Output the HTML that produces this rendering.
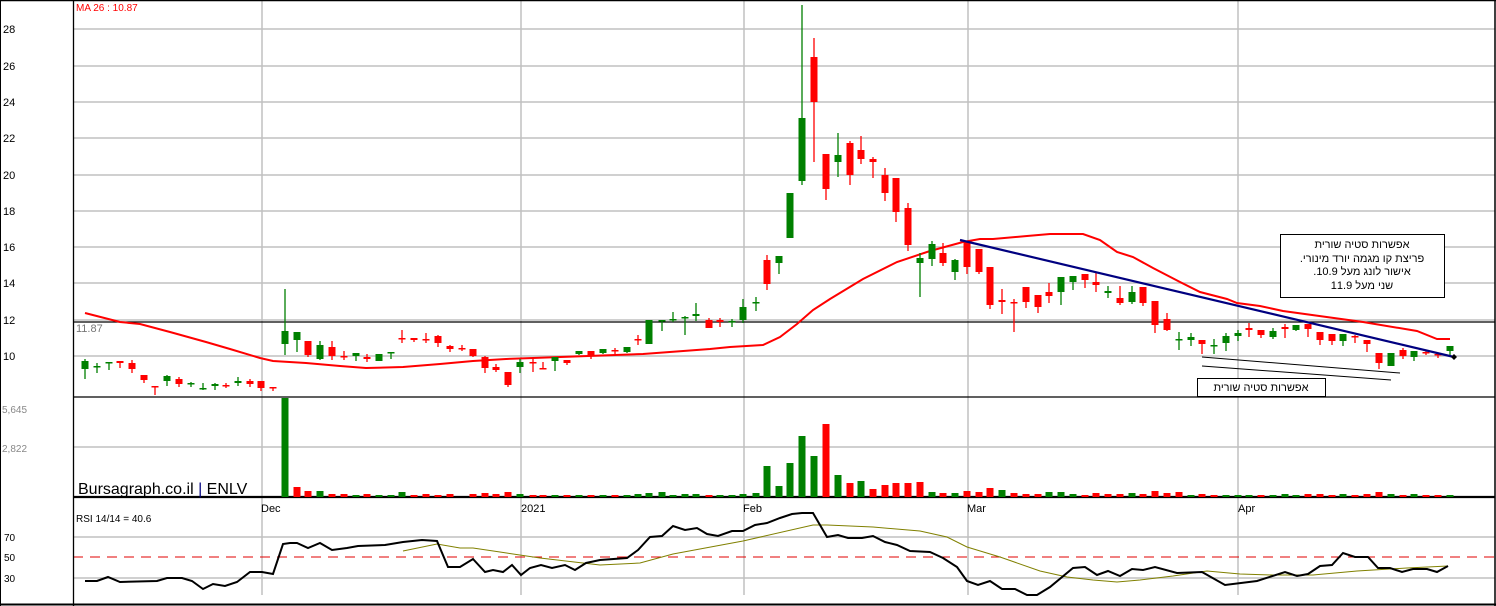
<!DOCTYPE html>
<html><head><meta charset="utf-8"><style>
html,body{margin:0;padding:0;background:#fff;}
svg{display:block;font-family:"Liberation Sans",Arial,sans-serif;}
</style></head><body>
<svg width="1496" height="606" viewBox="0 0 1496 606" xmlns="http://www.w3.org/2000/svg">
<rect width="1496" height="606" fill="#fff"/>
<!-- grid -->
<g stroke="#c0c0c0" stroke-width="1.5">
<line x1="73" y1="29" x2="1495" y2="29"/><line x1="73" y1="66" x2="1495" y2="66"/><line x1="73" y1="102" x2="1495" y2="102"/><line x1="73" y1="138" x2="1495" y2="138"/><line x1="73" y1="175" x2="1495" y2="175"/><line x1="73" y1="211" x2="1495" y2="211"/><line x1="73" y1="247" x2="1495" y2="247"/><line x1="73" y1="283" x2="1495" y2="283"/><line x1="73" y1="320" x2="1495" y2="320"/><line x1="73" y1="356" x2="1495" y2="356"/>
<line x1="73" y1="447" x2="1495" y2="447"/>
<line x1="73" y1="537" x2="1495" y2="537"/><line x1="73" y1="578" x2="1495" y2="578"/>
<line x1="262" y1="0" x2="262" y2="595"/><line x1="521" y1="0" x2="521" y2="595"/><line x1="744" y1="0" x2="744" y2="595"/><line x1="968" y1="0" x2="968" y2="595"/><line x1="1238" y1="0" x2="1238" y2="595"/>
</g>
<line x1="73" y1="557" x2="1495" y2="557" stroke="#e00000" stroke-dasharray="10,7" stroke-width="1"/>
<!-- frames -->
<g stroke="#000" fill="none">
<line x1="0" y1="0.5" x2="1496" y2="0.5" stroke-width="1.5"/>
<line x1="0.5" y1="0" x2="0.5" y2="606"/>
<line x1="1495" y1="0" x2="1495" y2="606" stroke-width="1.5"/>
<line x1="73.5" y1="0" x2="73.5" y2="606" stroke-width="1.3"/>
<line x1="73" y1="322" x2="1495" y2="322" stroke-width="1.3"/>
<line x1="73" y1="397" x2="1495" y2="397" stroke-width="1.3"/>
<line x1="73" y1="497" x2="1495" y2="497" stroke-width="2.2"/>
<line x1="0" y1="604.5" x2="1496" y2="604.5" stroke-width="2"/>
</g>
<!-- axis text -->
<g font-size="11" fill="#000">
<text x="3" y="33">28</text><text x="3" y="70">26</text><text x="3" y="106">24</text><text x="3" y="142">22</text><text x="3" y="179">20</text><text x="3" y="215">18</text><text x="3" y="251">16</text><text x="3" y="287">14</text><text x="3" y="324">12</text><text x="3" y="360">10</text>
<text x="76" y="332" fill="#777">11.87</text>
<text x="76" y="11" fill="#ff0000" font-size="10">MA 26 : 10.87</text>
<text x="2" y="413" fill="#888" font-size="10">5,645</text><text x="2" y="452" fill="#888" font-size="10">2,822</text>
<text x="261" y="512" font-size="11">Dec</text><text x="521" y="512" font-size="11">2021</text><text x="743" y="512" font-size="11">Feb</text><text x="967" y="512" font-size="11">Mar</text><text x="1238" y="512" font-size="11">Apr</text>
<text x="76" y="522" font-size="10">RSI 14/14 = 40.6</text>
<text x="4" y="541" font-size="10">70</text><text x="4" y="561" font-size="10">50</text><text x="4" y="582" font-size="10">30</text>
</g>
<text x="78" y="494" font-size="16" fill="#000">Bursagraph.co.il <tspan fill="#000080">|</tspan> ENLV</text>
<!-- MA line -->
<polyline fill="none" stroke="#ff0000" stroke-width="2" points="85,313 120,322 140,324 170,332 206,342 230,349 260,358 273,361 306,363 340,366 366,368 403,367 440,364 473,361 506,359 533,358 643,354 710,349 730,347 763,345 780,337 797,324 813,310 830,299 863,279 897,262 930,251 963,242 980,239 993,239 1027,236 1050,234 1083,234 1100,240 1117,252 1133,257 1153,268 1180,282 1200,292 1227,299 1237,303 1260,306 1283,311 1363,322 1417,331 1437,339 1450,339"/>
<!-- candles -->
<g id="c"></g>
<g stroke-width="1.3">
<line x1="85" y1="359" x2="85" y2="379" stroke="#008000"/><rect x="81.5" y="361" width="7" height="8" fill="#008000"/>
<line x1="97" y1="363" x2="97" y2="373" stroke="#008000"/><rect x="93.5" y="366" width="7" height="1.5" fill="#008000"/>
<line x1="109" y1="362" x2="109" y2="370" stroke="#008000"/><rect x="105.5" y="362" width="7" height="1.5" fill="#008000"/>
<line x1="120" y1="361" x2="120" y2="368" stroke="#ff0000"/><rect x="116.5" y="361" width="7" height="2" fill="#ff0000"/>
<line x1="132" y1="360" x2="132" y2="373" stroke="#ff0000"/><rect x="128.5" y="363" width="7" height="6" fill="#ff0000"/>
<line x1="144" y1="375" x2="144" y2="383" stroke="#ff0000"/><rect x="140.5" y="375" width="7" height="5" fill="#ff0000"/>
<line x1="155" y1="386" x2="155" y2="395" stroke="#ff0000"/><rect x="151.5" y="386" width="7" height="1.5" fill="#ff0000"/>
<line x1="167" y1="375" x2="167" y2="386" stroke="#008000"/><rect x="163.5" y="376" width="7" height="5" fill="#008000"/>
<line x1="179" y1="377" x2="179" y2="387" stroke="#ff0000"/><rect x="175.5" y="379" width="7" height="5" fill="#ff0000"/>
<line x1="191" y1="382" x2="191" y2="387" stroke="#008000"/><rect x="187.5" y="383" width="7" height="1.5" fill="#008000"/>
<line x1="203" y1="383" x2="203" y2="390" stroke="#008000"/><rect x="199.5" y="388" width="7" height="1.5" fill="#008000"/>
<line x1="215" y1="383" x2="215" y2="390" stroke="#008000"/><rect x="211.5" y="384" width="7" height="2" fill="#008000"/>
<line x1="226" y1="383" x2="226" y2="388" stroke="#ff0000"/><rect x="222.5" y="385" width="7" height="1.5" fill="#ff0000"/>
<line x1="238" y1="377" x2="238" y2="386" stroke="#008000"/><rect x="234.5" y="381" width="7" height="2" fill="#008000"/>
<line x1="250" y1="379" x2="250" y2="387" stroke="#ff0000"/><rect x="246.5" y="381" width="7" height="3" fill="#ff0000"/>
<line x1="261" y1="381" x2="261" y2="391" stroke="#ff0000"/><rect x="257.5" y="381" width="7" height="7" fill="#ff0000"/>
<line x1="273" y1="387" x2="273" y2="391" stroke="#ff0000"/><rect x="269.5" y="387" width="7" height="1.5" fill="#ff0000"/>
<line x1="285" y1="289" x2="285" y2="355" stroke="#008000"/><rect x="281.5" y="331" width="7" height="13" fill="#008000"/>
<line x1="297" y1="332" x2="297" y2="352" stroke="#008000"/><rect x="293.5" y="332" width="7" height="8" fill="#008000"/>
<line x1="308" y1="341" x2="308" y2="357" stroke="#ff0000"/><rect x="304.5" y="341" width="7" height="14" fill="#ff0000"/>
<line x1="320" y1="341" x2="320" y2="360" stroke="#008000"/><rect x="316.5" y="345" width="7" height="14" fill="#008000"/>
<line x1="332" y1="341" x2="332" y2="360" stroke="#ff0000"/><rect x="328.5" y="347" width="7" height="9" fill="#ff0000"/>
<line x1="344" y1="351" x2="344" y2="360" stroke="#ff0000"/><rect x="340.5" y="356" width="7" height="1.5" fill="#ff0000"/>
<line x1="356" y1="353" x2="356" y2="361" stroke="#008000"/><rect x="352.5" y="353" width="7" height="3" fill="#008000"/>
<line x1="367" y1="354" x2="367" y2="362" stroke="#ff0000"/><rect x="363.5" y="357" width="7" height="2" fill="#ff0000"/>
<line x1="379" y1="354" x2="379" y2="361" stroke="#008000"/><rect x="375.5" y="354" width="7" height="7" fill="#008000"/>
<line x1="391" y1="352" x2="391" y2="359" stroke="#008000"/><rect x="387.5" y="352" width="7" height="1.5" fill="#008000"/>
<line x1="402" y1="330" x2="402" y2="343" stroke="#ff0000"/><rect x="398.5" y="338" width="7" height="1.5" fill="#ff0000"/>
<line x1="414" y1="338" x2="414" y2="342" stroke="#ff0000"/><rect x="410.5" y="338" width="7" height="2" fill="#ff0000"/>
<line x1="426" y1="333" x2="426" y2="343" stroke="#ff0000"/><rect x="422.5" y="339" width="7" height="1.5" fill="#ff0000"/>
<line x1="438" y1="335" x2="438" y2="347" stroke="#ff0000"/><rect x="434.5" y="336" width="7" height="7" fill="#ff0000"/>
<line x1="450" y1="345" x2="450" y2="352" stroke="#ff0000"/><rect x="446.5" y="346" width="7" height="3" fill="#ff0000"/>
<line x1="462" y1="345" x2="462" y2="351" stroke="#ff0000"/><rect x="458.5" y="348" width="7" height="1.5" fill="#ff0000"/>
<line x1="473" y1="349" x2="473" y2="357" stroke="#ff0000"/><rect x="469.5" y="349" width="7" height="7" fill="#ff0000"/>
<line x1="485" y1="356" x2="485" y2="373" stroke="#ff0000"/><rect x="481.5" y="357" width="7" height="11" fill="#ff0000"/>
<line x1="496" y1="364" x2="496" y2="372" stroke="#ff0000"/><rect x="492.5" y="367" width="7" height="3" fill="#ff0000"/>
<line x1="508" y1="372" x2="508" y2="387" stroke="#ff0000"/><rect x="504.5" y="372" width="7" height="13" fill="#ff0000"/>
<line x1="520" y1="359" x2="520" y2="373" stroke="#008000"/><rect x="516.5" y="362" width="7" height="5" fill="#008000"/>
<line x1="533" y1="358" x2="533" y2="372" stroke="#ff0000"/><rect x="529.5" y="362" width="7" height="1.5" fill="#ff0000"/>
<line x1="543" y1="362" x2="543" y2="369" stroke="#ff0000"/><rect x="539.5" y="368" width="7" height="1.5" fill="#ff0000"/>
<line x1="555" y1="357" x2="555" y2="371" stroke="#008000"/><rect x="551.5" y="357" width="7" height="4" fill="#008000"/>
<line x1="567" y1="360" x2="567" y2="365" stroke="#ff0000"/><rect x="563.5" y="360" width="7" height="3" fill="#ff0000"/>
<line x1="579" y1="351" x2="579" y2="355" stroke="#008000"/><rect x="575.5" y="351" width="7" height="3" fill="#008000"/>
<line x1="591" y1="351" x2="591" y2="359" stroke="#ff0000"/><rect x="587.5" y="351" width="7" height="5" fill="#ff0000"/>
<line x1="603" y1="349" x2="603" y2="354" stroke="#008000"/><rect x="599.5" y="349" width="7" height="4" fill="#008000"/>
<line x1="615" y1="348" x2="615" y2="354" stroke="#ff0000"/><rect x="611.5" y="350" width="7" height="1.5" fill="#ff0000"/>
<line x1="627" y1="347" x2="627" y2="353" stroke="#008000"/><rect x="623.5" y="347" width="7" height="5" fill="#008000"/>
<line x1="638" y1="335" x2="638" y2="345" stroke="#ff0000"/><rect x="634.5" y="339" width="7" height="1.5" fill="#ff0000"/>
<line x1="649" y1="320" x2="649" y2="344" stroke="#008000"/><rect x="645.5" y="320" width="7" height="24" fill="#008000"/>
<line x1="662" y1="320" x2="662" y2="331" stroke="#008000"/><rect x="658.5" y="320" width="7" height="1.5" fill="#008000"/>
<line x1="673" y1="312" x2="673" y2="322" stroke="#008000"/><rect x="669.5" y="319" width="7" height="1.5" fill="#008000"/>
<line x1="685" y1="316" x2="685" y2="335" stroke="#008000"/><rect x="681.5" y="317" width="7" height="1.5" fill="#008000"/>
<line x1="696" y1="303" x2="696" y2="321" stroke="#008000"/><rect x="692.5" y="314" width="7" height="2" fill="#008000"/>
<line x1="709" y1="318" x2="709" y2="328" stroke="#ff0000"/><rect x="705.5" y="320" width="7" height="8" fill="#ff0000"/>
<line x1="720" y1="318" x2="720" y2="327" stroke="#ff0000"/><rect x="716.5" y="320" width="7" height="2" fill="#ff0000"/>
<line x1="732" y1="319" x2="732" y2="327" stroke="#008000"/><rect x="728.5" y="321" width="7" height="1.5" fill="#008000"/>
<line x1="743" y1="299" x2="743" y2="323" stroke="#008000"/><rect x="739.5" y="307" width="7" height="13" fill="#008000"/>
<line x1="756" y1="297" x2="756" y2="311" stroke="#008000"/><rect x="752.5" y="302" width="7" height="1.5" fill="#008000"/>
<line x1="767" y1="255" x2="767" y2="290" stroke="#ff0000"/><rect x="763.5" y="260" width="7" height="24" fill="#ff0000"/>
<line x1="779" y1="256" x2="779" y2="274" stroke="#008000"/><rect x="775.5" y="256" width="7" height="7" fill="#008000"/>
<line x1="790" y1="193" x2="790" y2="238" stroke="#008000"/><rect x="786.5" y="193" width="7" height="45" fill="#008000"/>
<line x1="802" y1="5" x2="802" y2="185" stroke="#008000"/><rect x="798.5" y="118" width="7" height="63" fill="#008000"/>
<line x1="814" y1="38" x2="814" y2="162" stroke="#ff0000"/><rect x="810.5" y="57" width="7" height="45" fill="#ff0000"/>
<line x1="826" y1="154" x2="826" y2="200" stroke="#ff0000"/><rect x="822.5" y="154" width="7" height="35" fill="#ff0000"/>
<line x1="838" y1="133" x2="838" y2="177" stroke="#008000"/><rect x="834.5" y="155" width="7" height="7" fill="#008000"/>
<line x1="850" y1="141" x2="850" y2="185" stroke="#ff0000"/><rect x="846.5" y="143" width="7" height="32" fill="#ff0000"/>
<line x1="861" y1="136" x2="861" y2="164" stroke="#ff0000"/><rect x="857.5" y="150" width="7" height="9" fill="#ff0000"/>
<line x1="873" y1="157" x2="873" y2="178" stroke="#ff0000"/><rect x="869.5" y="159" width="7" height="3" fill="#ff0000"/>
<line x1="885" y1="168" x2="885" y2="201" stroke="#ff0000"/><rect x="881.5" y="175" width="7" height="18" fill="#ff0000"/>
<line x1="896" y1="178" x2="896" y2="222" stroke="#ff0000"/><rect x="892.5" y="178" width="7" height="34" fill="#ff0000"/>
<line x1="908" y1="203" x2="908" y2="251" stroke="#ff0000"/><rect x="904.5" y="208" width="7" height="37" fill="#ff0000"/>
<line x1="920" y1="253" x2="920" y2="297" stroke="#008000"/><rect x="916.5" y="258" width="7" height="5" fill="#008000"/>
<line x1="932" y1="241" x2="932" y2="266" stroke="#008000"/><rect x="928.5" y="244" width="7" height="15" fill="#008000"/>
<line x1="943" y1="243" x2="943" y2="266" stroke="#ff0000"/><rect x="939.5" y="253" width="7" height="10" fill="#ff0000"/>
<line x1="955" y1="259" x2="955" y2="280" stroke="#008000"/><rect x="951.5" y="260" width="7" height="12" fill="#008000"/>
<line x1="967" y1="241" x2="967" y2="274" stroke="#ff0000"/><rect x="963.5" y="241" width="7" height="26" fill="#ff0000"/>
<line x1="979" y1="249" x2="979" y2="274" stroke="#ff0000"/><rect x="975.5" y="249" width="7" height="23" fill="#ff0000"/>
<line x1="990" y1="267" x2="990" y2="309" stroke="#ff0000"/><rect x="986.5" y="267" width="7" height="38" fill="#ff0000"/>
<line x1="1002" y1="289" x2="1002" y2="314" stroke="#ff0000"/><rect x="998.5" y="300" width="7" height="2" fill="#ff0000"/>
<line x1="1014" y1="299" x2="1014" y2="332" stroke="#ff0000"/><rect x="1010.5" y="302" width="7" height="1.5" fill="#ff0000"/>
<line x1="1026" y1="287" x2="1026" y2="308" stroke="#ff0000"/><rect x="1022.5" y="287" width="7" height="15" fill="#ff0000"/>
<line x1="1038" y1="295" x2="1038" y2="313" stroke="#ff0000"/><rect x="1034.5" y="295" width="7" height="12" fill="#ff0000"/>
<line x1="1049" y1="283" x2="1049" y2="303" stroke="#ff0000"/><rect x="1045.5" y="292" width="7" height="4" fill="#ff0000"/>
<line x1="1061" y1="277" x2="1061" y2="305" stroke="#008000"/><rect x="1057.5" y="277" width="7" height="15" fill="#008000"/>
<line x1="1073" y1="276" x2="1073" y2="290" stroke="#008000"/><rect x="1069.5" y="276" width="7" height="6" fill="#008000"/>
<line x1="1085" y1="274" x2="1085" y2="288" stroke="#ff0000"/><rect x="1081.5" y="274" width="7" height="6" fill="#ff0000"/>
<line x1="1096" y1="272" x2="1096" y2="292" stroke="#ff0000"/><rect x="1092.5" y="282" width="7" height="3" fill="#ff0000"/>
<line x1="1108" y1="286" x2="1108" y2="298" stroke="#008000"/><rect x="1104.5" y="291" width="7" height="2" fill="#008000"/>
<line x1="1120" y1="286" x2="1120" y2="305" stroke="#ff0000"/><rect x="1116.5" y="298" width="7" height="5" fill="#ff0000"/>
<line x1="1132" y1="286" x2="1132" y2="304" stroke="#008000"/><rect x="1128.5" y="292" width="7" height="10" fill="#008000"/>
<line x1="1143" y1="287" x2="1143" y2="306" stroke="#ff0000"/><rect x="1139.5" y="287" width="7" height="16" fill="#ff0000"/>
<line x1="1155" y1="301" x2="1155" y2="333" stroke="#ff0000"/><rect x="1151.5" y="301" width="7" height="24" fill="#ff0000"/>
<line x1="1167" y1="313" x2="1167" y2="331" stroke="#ff0000"/><rect x="1163.5" y="319" width="7" height="11" fill="#ff0000"/>
<line x1="1179" y1="332" x2="1179" y2="350" stroke="#008000"/><rect x="1175.5" y="339" width="7" height="1.5" fill="#008000"/>
<line x1="1191" y1="333" x2="1191" y2="346" stroke="#008000"/><rect x="1187.5" y="337" width="7" height="3" fill="#008000"/>
<line x1="1202" y1="340" x2="1202" y2="354" stroke="#ff0000"/><rect x="1198.5" y="340" width="7" height="4" fill="#ff0000"/>
<line x1="1214" y1="339" x2="1214" y2="354" stroke="#008000"/><rect x="1210.5" y="345" width="7" height="1.5" fill="#008000"/>
<line x1="1226" y1="333" x2="1226" y2="351" stroke="#008000"/><rect x="1222.5" y="336" width="7" height="7" fill="#008000"/>
<line x1="1238" y1="330" x2="1238" y2="341" stroke="#008000"/><rect x="1234.5" y="333" width="7" height="3" fill="#008000"/>
<line x1="1249" y1="323" x2="1249" y2="337" stroke="#ff0000"/><rect x="1245.5" y="328" width="7" height="2" fill="#ff0000"/>
<line x1="1261" y1="330" x2="1261" y2="338" stroke="#ff0000"/><rect x="1257.5" y="330" width="7" height="5" fill="#ff0000"/>
<line x1="1273" y1="328" x2="1273" y2="339" stroke="#008000"/><rect x="1269.5" y="331" width="7" height="6" fill="#008000"/>
<line x1="1285" y1="324" x2="1285" y2="338" stroke="#ff0000"/><rect x="1281.5" y="327" width="7" height="2" fill="#ff0000"/>
<line x1="1296" y1="325" x2="1296" y2="331" stroke="#008000"/><rect x="1292.5" y="325" width="7" height="5" fill="#008000"/>
<line x1="1308" y1="324" x2="1308" y2="337" stroke="#ff0000"/><rect x="1304.5" y="324" width="7" height="5" fill="#ff0000"/>
<line x1="1320" y1="332" x2="1320" y2="345" stroke="#ff0000"/><rect x="1316.5" y="332" width="7" height="8" fill="#ff0000"/>
<line x1="1332" y1="334" x2="1332" y2="345" stroke="#ff0000"/><rect x="1328.5" y="334" width="7" height="7" fill="#ff0000"/>
<line x1="1343" y1="334" x2="1343" y2="346" stroke="#008000"/><rect x="1339.5" y="334" width="7" height="7" fill="#008000"/>
<line x1="1355" y1="335" x2="1355" y2="343" stroke="#ff0000"/><rect x="1351.5" y="336" width="7" height="1.5" fill="#ff0000"/>
<line x1="1367" y1="340" x2="1367" y2="352" stroke="#ff0000"/><rect x="1363.5" y="340" width="7" height="4" fill="#ff0000"/>
<line x1="1379" y1="353" x2="1379" y2="369" stroke="#ff0000"/><rect x="1375.5" y="353" width="7" height="10" fill="#ff0000"/>
<line x1="1391" y1="353" x2="1391" y2="366" stroke="#008000"/><rect x="1387.5" y="353" width="7" height="13" fill="#008000"/>
<line x1="1403" y1="348" x2="1403" y2="359" stroke="#ff0000"/><rect x="1399.5" y="350" width="7" height="6" fill="#ff0000"/>
<line x1="1414" y1="351" x2="1414" y2="361" stroke="#008000"/><rect x="1410.5" y="351" width="7" height="6" fill="#008000"/>
<line x1="1426" y1="350" x2="1426" y2="355" stroke="#ff0000"/><rect x="1422.5" y="352" width="7" height="1.5" fill="#ff0000"/>
<line x1="1438" y1="354" x2="1438" y2="358" stroke="#ff0000"/><rect x="1434.5" y="354" width="7" height="1.5" fill="#ff0000"/>
<line x1="1450" y1="346" x2="1450" y2="357" stroke="#008000"/><rect x="1446.5" y="346" width="7" height="5" fill="#008000"/>
</g>
<!-- trend lines -->
<line x1="960" y1="240" x2="1454" y2="357" stroke="#000080" stroke-width="2.2"/>
<path d="M1454 354 L1457 357 L1454 360 L1451 357Z" fill="#000"/>
<line x1="1202" y1="357" x2="1400" y2="373" stroke="#000" stroke-width="1"/>
<line x1="1202" y1="366" x2="1391" y2="380" stroke="#000" stroke-width="1"/>
<!-- annotations -->
<rect x="1280.5" y="234.5" width="164" height="63" fill="#fff" stroke="#000"/>
<g font-family="'Liberation Sans','DejaVu Sans',sans-serif" font-size="11" text-anchor="middle" fill="#000">
<text x="1362" y="248" direction="rtl">אפשרות סטיה שורית</text>
<text x="1362" y="262" direction="rtl">פריצת קו מגמה יורד מינורי.</text>
<text x="1362" y="275" direction="rtl">אישור לונג מעל 10.9.</text>
<text x="1362" y="289" direction="rtl">שני מעל 11.9</text>
</g>
<rect x="1197.5" y="378.5" width="128" height="18" fill="#fff" stroke="#000"/>
<text x="1261" y="391" font-size="11" text-anchor="middle" direction="rtl">אפשרות סטיה שורית</text>
<!-- volume -->
<g>
<rect x="281.5" y="398" width="7" height="99" fill="#008000"/>
<rect x="293.5" y="487" width="7" height="10" fill="#ff0000"/>
<rect x="304.5" y="491" width="7" height="6" fill="#ff0000"/>
<rect x="316.5" y="491" width="7" height="6" fill="#008000"/>
<rect x="328.5" y="494" width="7" height="3" fill="#ff0000"/>
<rect x="340.5" y="494" width="7" height="3" fill="#ff0000"/>
<rect x="352.5" y="495" width="7" height="2" fill="#008000"/>
<rect x="363.5" y="494" width="7" height="3" fill="#ff0000"/>
<rect x="375.5" y="495" width="7" height="2" fill="#008000"/>
<rect x="387.5" y="495" width="7" height="2" fill="#008000"/>
<rect x="398.5" y="492" width="7" height="5" fill="#008000"/>
<rect x="410.5" y="495" width="7" height="2" fill="#ff0000"/>
<rect x="422.5" y="494" width="7" height="3" fill="#ff0000"/>
<rect x="434.5" y="495" width="7" height="2" fill="#ff0000"/>
<rect x="446.5" y="494" width="7" height="3" fill="#ff0000"/>
<rect x="469.5" y="494" width="7" height="3" fill="#ff0000"/>
<rect x="481.5" y="493" width="7" height="4" fill="#ff0000"/>
<rect x="492.5" y="494" width="7" height="3" fill="#ff0000"/>
<rect x="504.5" y="492" width="7" height="5" fill="#ff0000"/>
<rect x="516.5" y="494" width="7" height="3" fill="#008000"/>
<rect x="529.5" y="495" width="7" height="2" fill="#ff0000"/>
<rect x="539.5" y="495" width="7" height="2" fill="#ff0000"/>
<rect x="551.5" y="495" width="7" height="2" fill="#008000"/>
<rect x="563.5" y="495" width="7" height="2" fill="#ff0000"/>
<rect x="575.5" y="495" width="7" height="2" fill="#008000"/>
<rect x="587.5" y="495" width="7" height="2" fill="#ff0000"/>
<rect x="599.5" y="495" width="7" height="2" fill="#008000"/>
<rect x="611.5" y="495" width="7" height="2" fill="#ff0000"/>
<rect x="623.5" y="495" width="7" height="2" fill="#008000"/>
<rect x="634.5" y="494" width="7" height="3" fill="#008000"/>
<rect x="645.5" y="493" width="7" height="4" fill="#008000"/>
<rect x="658.5" y="492" width="7" height="5" fill="#008000"/>
<rect x="669.5" y="495" width="7" height="2" fill="#008000"/>
<rect x="681.5" y="494" width="7" height="3" fill="#008000"/>
<rect x="692.5" y="494" width="7" height="3" fill="#008000"/>
<rect x="705.5" y="495" width="7" height="2" fill="#ff0000"/>
<rect x="716.5" y="495" width="7" height="2" fill="#008000"/>
<rect x="728.5" y="495" width="7" height="2" fill="#008000"/>
<rect x="739.5" y="494" width="7" height="3" fill="#008000"/>
<rect x="752.5" y="493" width="7" height="4" fill="#008000"/>
<rect x="763.5" y="466" width="7" height="31" fill="#008000"/>
<rect x="775.5" y="486" width="7" height="11" fill="#008000"/>
<rect x="786.5" y="463" width="7" height="34" fill="#008000"/>
<rect x="798.5" y="436" width="7" height="61" fill="#008000"/>
<rect x="810.5" y="456" width="7" height="41" fill="#008000"/>
<rect x="822.5" y="424" width="7" height="73" fill="#ff0000"/>
<rect x="834.5" y="475" width="7" height="22" fill="#008000"/>
<rect x="846.5" y="483" width="7" height="14" fill="#ff0000"/>
<rect x="857.5" y="481" width="7" height="16" fill="#008000"/>
<rect x="869.5" y="489" width="7" height="8" fill="#ff0000"/>
<rect x="881.5" y="485" width="7" height="12" fill="#ff0000"/>
<rect x="892.5" y="483" width="7" height="14" fill="#ff0000"/>
<rect x="904.5" y="483" width="7" height="14" fill="#ff0000"/>
<rect x="916.5" y="482" width="7" height="15" fill="#ff0000"/>
<rect x="928.5" y="492" width="7" height="5" fill="#008000"/>
<rect x="939.5" y="493" width="7" height="4" fill="#ff0000"/>
<rect x="951.5" y="493" width="7" height="4" fill="#008000"/>
<rect x="963.5" y="491" width="7" height="6" fill="#ff0000"/>
<rect x="975.5" y="492" width="7" height="5" fill="#ff0000"/>
<rect x="986.5" y="488" width="7" height="9" fill="#ff0000"/>
<rect x="998.5" y="490" width="7" height="7" fill="#008000"/>
<rect x="1010.5" y="493" width="7" height="4" fill="#ff0000"/>
<rect x="1022.5" y="494" width="7" height="3" fill="#ff0000"/>
<rect x="1034.5" y="494" width="7" height="3" fill="#ff0000"/>
<rect x="1045.5" y="492" width="7" height="5" fill="#008000"/>
<rect x="1057.5" y="492" width="7" height="5" fill="#008000"/>
<rect x="1069.5" y="494" width="7" height="3" fill="#008000"/>
<rect x="1081.5" y="495" width="7" height="2" fill="#ff0000"/>
<rect x="1092.5" y="493" width="7" height="4" fill="#ff0000"/>
<rect x="1104.5" y="494" width="7" height="3" fill="#ff0000"/>
<rect x="1116.5" y="494" width="7" height="3" fill="#ff0000"/>
<rect x="1128.5" y="493" width="7" height="4" fill="#008000"/>
<rect x="1139.5" y="494" width="7" height="3" fill="#ff0000"/>
<rect x="1151.5" y="491" width="7" height="6" fill="#ff0000"/>
<rect x="1163.5" y="493" width="7" height="4" fill="#ff0000"/>
<rect x="1175.5" y="492" width="7" height="5" fill="#ff0000"/>
<rect x="1187.5" y="495" width="7" height="2" fill="#008000"/>
<rect x="1198.5" y="494" width="7" height="3" fill="#ff0000"/>
<rect x="1210.5" y="495" width="7" height="2" fill="#ff0000"/>
<rect x="1222.5" y="495" width="7" height="2" fill="#008000"/>
<rect x="1234.5" y="495" width="7" height="2" fill="#008000"/>
<rect x="1245.5" y="495" width="7" height="2" fill="#008000"/>
<rect x="1257.5" y="495" width="7" height="2" fill="#ff0000"/>
<rect x="1269.5" y="495" width="7" height="2" fill="#008000"/>
<rect x="1281.5" y="494" width="7" height="3" fill="#008000"/>
<rect x="1292.5" y="495" width="7" height="2" fill="#008000"/>
<rect x="1304.5" y="494" width="7" height="3" fill="#ff0000"/>
<rect x="1316.5" y="494" width="7" height="3" fill="#ff0000"/>
<rect x="1328.5" y="495" width="7" height="2" fill="#ff0000"/>
<rect x="1339.5" y="494" width="7" height="3" fill="#008000"/>
<rect x="1351.5" y="495" width="7" height="2" fill="#ff0000"/>
<rect x="1363.5" y="494" width="7" height="3" fill="#ff0000"/>
<rect x="1375.5" y="492" width="7" height="5" fill="#ff0000"/>
<rect x="1387.5" y="494" width="7" height="3" fill="#008000"/>
<rect x="1399.5" y="495" width="7" height="2" fill="#ff0000"/>
<rect x="1410.5" y="494" width="7" height="3" fill="#008000"/>
<rect x="1422.5" y="495" width="7" height="2" fill="#ff0000"/>
<rect x="1434.5" y="495" width="7" height="2" fill="#ff0000"/>
<rect x="1446.5" y="495" width="7" height="2" fill="#008000"/>
</g>
<!-- RSI -->
<polyline fill="none" stroke="#808000" stroke-width="1" points="403,551 437,544 460,548 473,548 500,552 540,558 600,565 640,563 673,554 743,541 813,525 827,525 873,527 920,531 947,537 967,547 1000,557 1040,571 1067,577 1093,580 1117,582 1140,580 1173,576 1207,571 1240,574 1273,575 1313,575 1357,571 1407,568 1448,566"/>
<polyline fill="none" stroke="#000" stroke-width="2" points="85,581 97,581 108,577 120,582 157,581 167,578 182,578 192,581 203,589 213,584 225,586 237,582 250,572 262,572 273,574 283,544 290,543 297,543 308,548 320,543 332,550 347,548 358,546 385,545 403,542 422,540 437,541 448,567 460,567 473,559 485,572 493,570 503,572 512,565 521,575 530,568 541,565 552,568 565,565 575,570 586,563 600,560 627,558 638,550 650,537 662,536 673,526 685,530 697,528 707,534 718,536 732,531 743,531 755,525 767,523 780,518 792,514 802,513 813,513 827,537 838,535 848,538 862,538 873,536 885,542 897,545 910,551 930,552 943,558 957,567 967,581 978,585 990,581 1002,589 1015,589 1027,595 1037,595 1050,587 1073,568 1085,567 1097,575 1108,571 1120,576 1132,569 1143,570 1155,567 1177,573 1202,572 1225,585 1257,581 1285,572 1297,576 1308,574 1320,566 1332,565 1343,553 1355,557 1368,557 1378,568 1390,568 1402,572 1413,569 1427,569 1437,572 1448,566"/>
</svg>
</body></html>
